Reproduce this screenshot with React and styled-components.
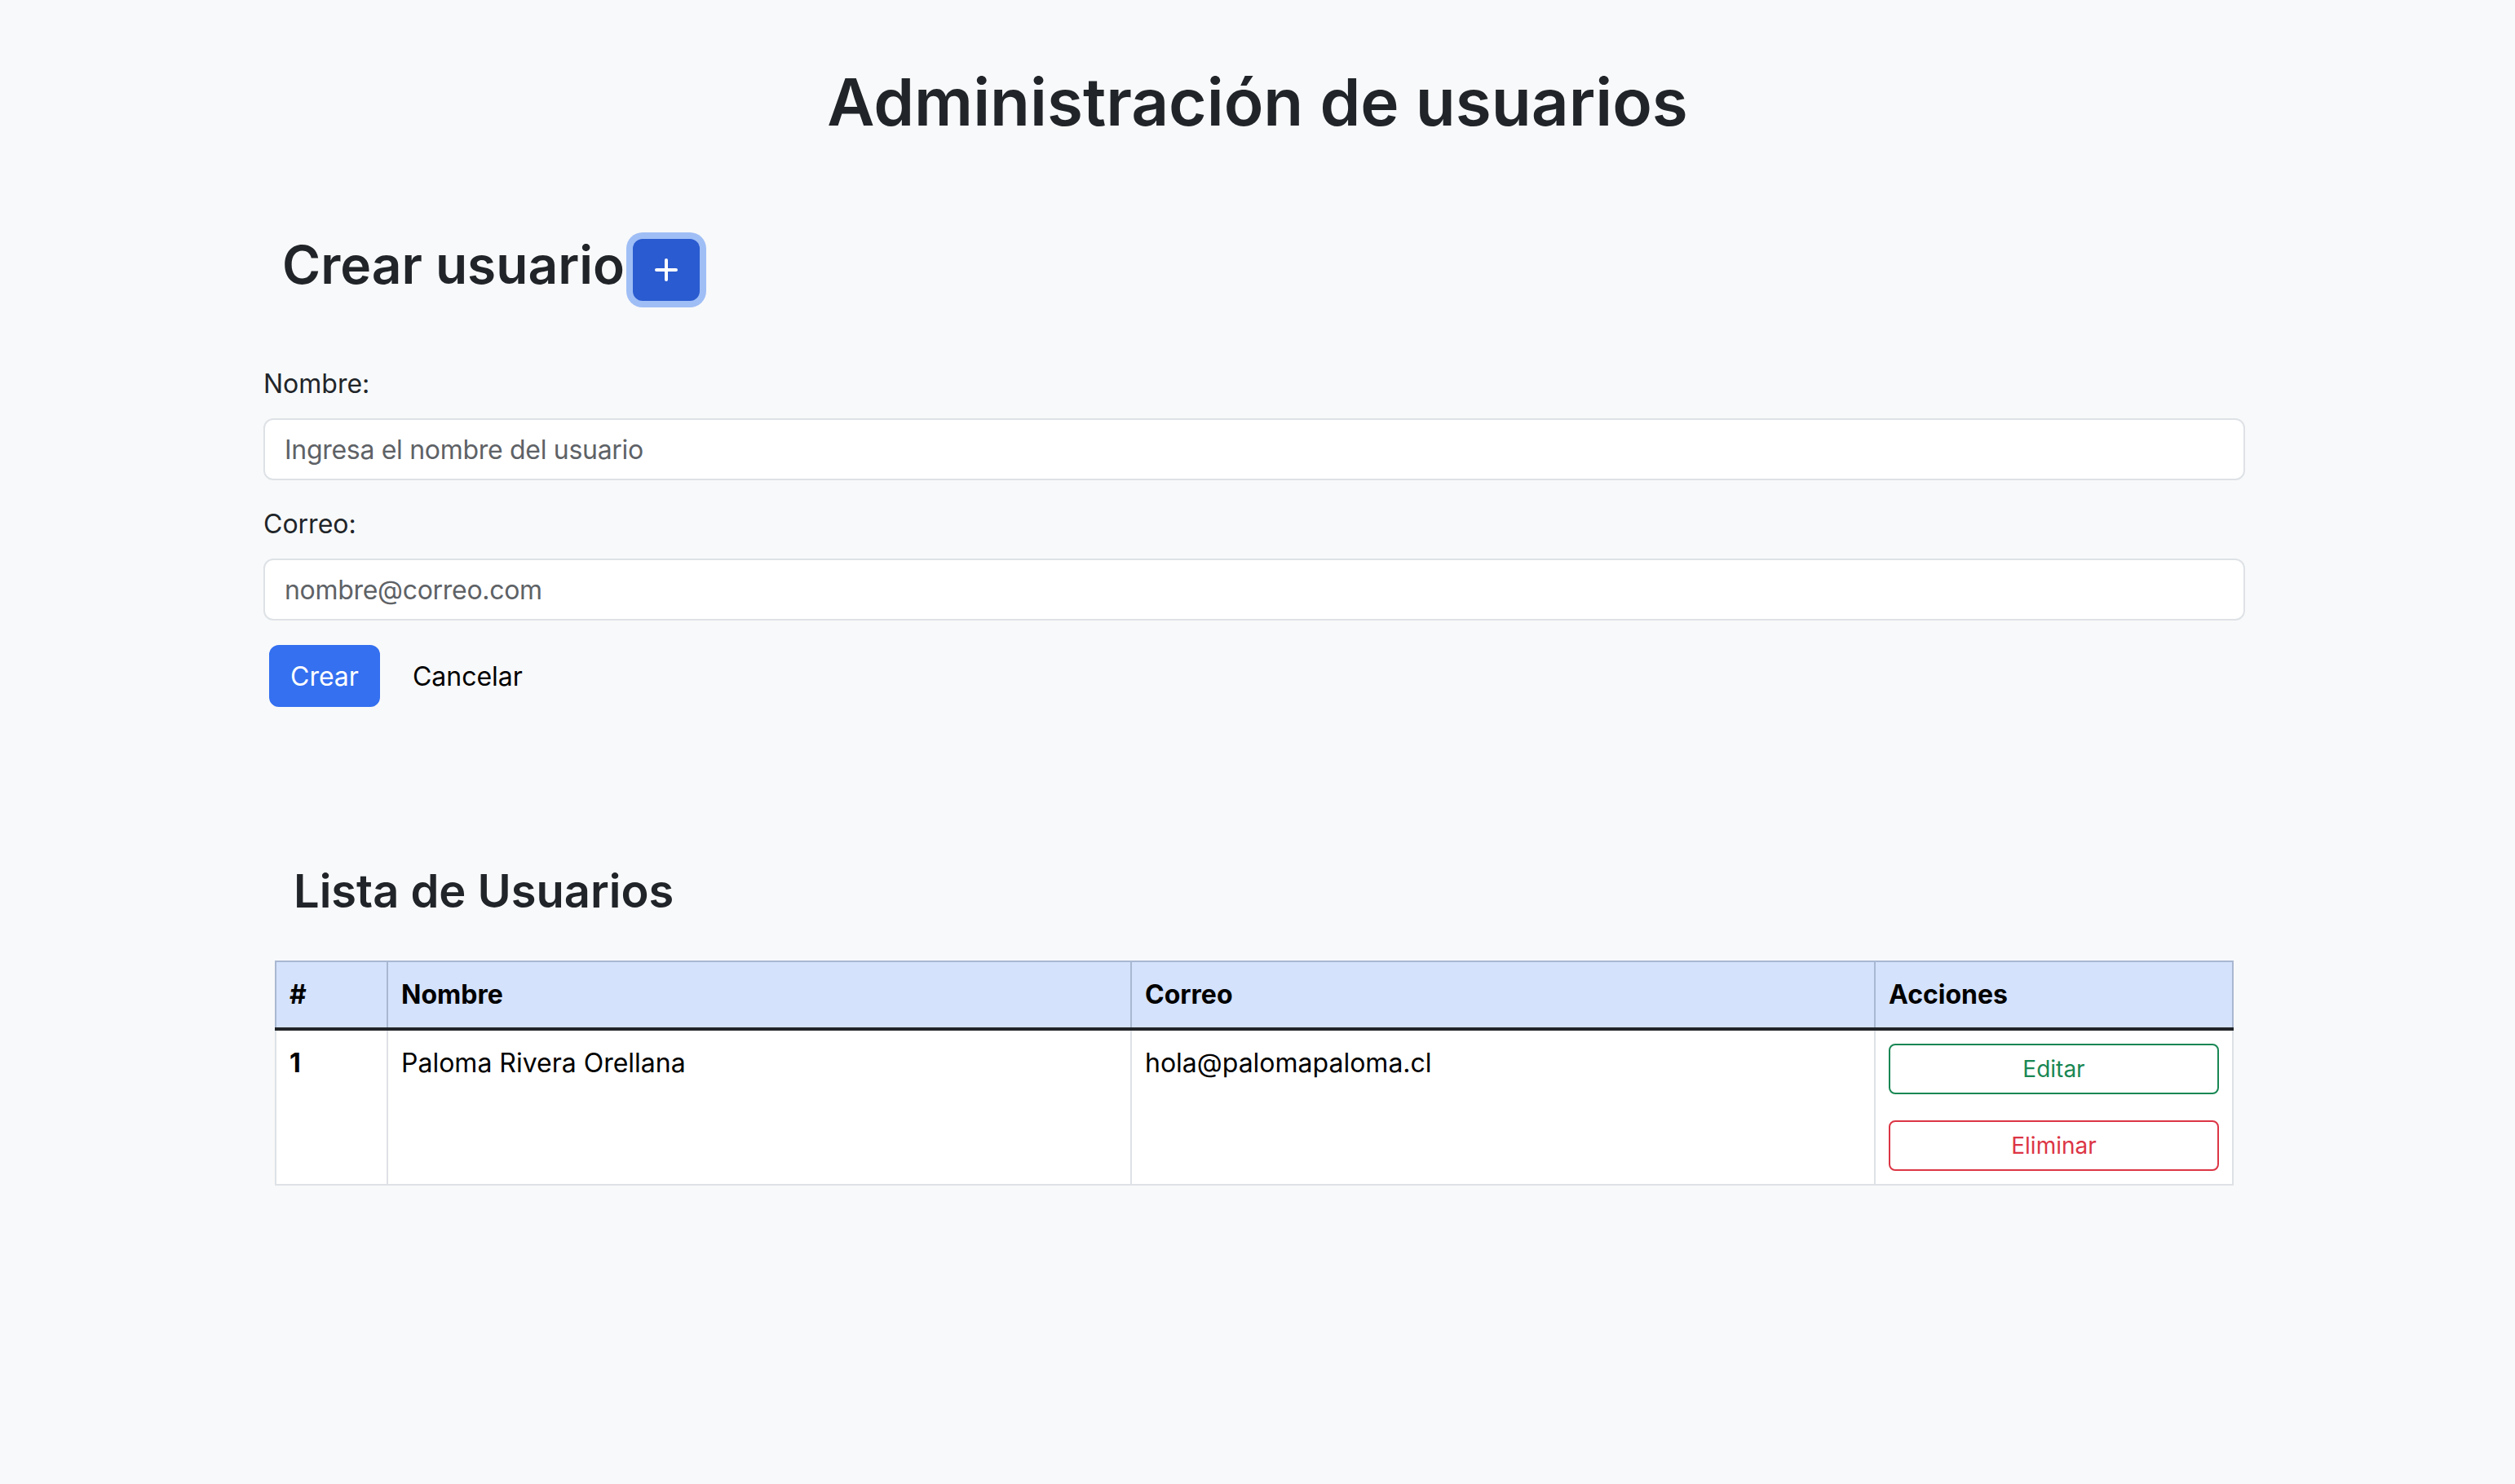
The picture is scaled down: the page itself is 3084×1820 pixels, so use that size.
import styled, { createGlobalStyle } from 'styled-components';

const GlobalStyle = createGlobalStyle`
    body {
        margin: 0;
        background: #f8f9fa;
        font-family: Inter, "Noto Sans", sans-serif;
        color: #212529;
    }
`;

const usuarios = [
    { id: 1, nombre: 'Paloma Rivera Orellana', correo: 'hola@palomapaloma.cl' },
];

const App = () => {
    return (
        <Page>
            <GlobalStyle />
            <Title>Administración de usuarios</Title>
            <Container>
                <HeadRow>
                    <SectionTitle>Crear usuario</SectionTitle>
                    <AddButton aria-label="Crear usuario">
                        <svg width="28" height="28" viewBox="0 0 28 28">
                            <path d="M14 2v24M2 14h24" stroke="#fff" strokeWidth="4" strokeLinecap="round" />
                        </svg>
                    </AddButton>
                </HeadRow>

                <Form onSubmit={(e) => e.preventDefault()}>
                    <Field>
                        <Label htmlFor="nombre">Nombre:</Label>
                        <Input id="nombre" type="text" placeholder="Ingresa el nombre del usuario" />
                    </Field>
                    <Field>
                        <Label htmlFor="correo">Correo:</Label>
                        <Input id="correo" type="email" placeholder="nombre@correo.com" />
                    </Field>
                    <ButtonRow>
                        <PrimaryButton type="submit">Crear</PrimaryButton>
                        <LinkButton type="button">Cancelar</LinkButton>
                    </ButtonRow>
                </Form>

                <ListSection>
                    <ListTitle>Lista de Usuarios</ListTitle>
                    <TableWrap>
                        <Table>
                            <colgroup>
                                <col style={{ width: 137 }} />
                                <col style={{ width: 912 }} />
                                <col style={{ width: 912 }} />
                                <col style={{ width: 439 }} />
                            </colgroup>
                            <thead>
                                <tr>
                                    <Th>#</Th>
                                    <Th>Nombre</Th>
                                    <Th>Correo</Th>
                                    <Th>Acciones</Th>
                                </tr>
                            </thead>
                            <tbody>
                                {usuarios.map((u) => (
                                    <tr key={u.id}>
                                        <Td $bold>{u.id}</Td>
                                        <Td>{u.nombre}</Td>
                                        <Td>{u.correo}</Td>
                                        <Td>
                                            <OutlineButton $color="#198754" $spaced>Editar</OutlineButton>
                                            <OutlineButton $color="#dc3545">Eliminar</OutlineButton>
                                        </Td>
                                    </tr>
                                ))}
                            </tbody>
                        </Table>
                    </TableWrap>
                </ListSection>
            </Container>
        </Page>
    );
};

export default App;

const Page = styled.div`
    padding: 77px 0 120px;
`;

const Title = styled.h1`
    margin: 0;
    text-align: center;
    font-size: 80px;
    line-height: 96px;
    font-weight: 600;
`;

const Container = styled.div`
    width: 2430px;
    margin: 113px 0 0 323px;
`;

const HeadRow = styled.div`
    display: flex;
    align-items: flex-start;
    gap: 10px;
    padding-left: 23px;
`;

const SectionTitle = styled.h2`
    margin: 0;
    font-size: 64px;
    line-height: 77px;
    font-weight: 600;
`;

const AddButton = styled.button`
    width: 82px;
    height: 76px;
    margin-top: 7px;
    border: none;
    border-radius: 12px;
    background: #2a5bd0;
    box-shadow: 0 0 0 8px #9fbef6;
    display: flex;
    align-items: center;
    justify-content: center;
    padding: 0;
`;

const Form = styled.form`
    margin-top: 78px;
`;

const Field = styled.div`
    margin-bottom: 30px;
`;

const Label = styled.label`
    display: block;
    font-size: 32px;
    line-height: 48px;
    margin-bottom: 18px;
`;

const Input = styled.input`
    display: block;
    width: 100%;
    height: 76px;
    box-sizing: border-box;
    border: 2px solid #dee2e6;
    border-radius: 12px;
    padding: 0 24px;
    background: #fff;
    font-family: inherit;
    font-size: 32px;
    letter-spacing: -0.3px;
    color: #212529;

    &::placeholder {
        color: #5e6266;
    }
`;

const ButtonRow = styled.div`
    display: flex;
    align-items: center;
    margin-top: 2px;
`;

const PrimaryButton = styled.button`
    height: 76px;
    margin-left: 7px;
    padding: 0 24px;
    border: 2px solid #3470f0;
    border-radius: 12px;
    background: #3470f0;
    color: #fff;
    font-family: inherit;
    font-size: 32px;
`;

const LinkButton = styled.button`
    height: 76px;
    margin-left: 16px;
    padding: 0 24px;
    border: none;
    background: none;
    color: #000;
    font-family: inherit;
    font-size: 32px;
`;

const ListSection = styled.section`
    margin-top: 193px;
`;

const ListTitle = styled.h3`
    margin: 0;
    padding-left: 37px;
    font-size: 56px;
    line-height: 67px;
    font-weight: 600;
`;

const TableWrap = styled.div`
    margin: 51px 16px 0 14px;
`;

const Table = styled.table`
    width: 2400px;
    border-collapse: collapse;
    table-layout: fixed;
    font-size: 32px;
    line-height: 48px;
    color: #000;
`;

const Th = styled.th`
    background: #d4e2fb;
    border: 2px solid #a9b8d2;
    padding: 16px;
    text-align: left;
    font-weight: 700;
`;

const Td = styled.td`
    background: #fff;
    border: 2px solid #dee2e6;
    border-top: 4px solid #212529;
    padding: 16px;
    vertical-align: top;
    font-weight: ${(p) => (p.$bold ? 700 : 400)};
`;

const OutlineButton = styled.button`
    display: block;
    width: 100%;
    height: 62px;
    margin-bottom: ${(p) => (p.$spaced ? '32px' : '0')};
    border: 2px solid ${(p) => p.$color};
    border-radius: 8px;
    background: transparent;
    color: ${(p) => p.$color};
    font-family: inherit;
    font-size: 28px;
`;
